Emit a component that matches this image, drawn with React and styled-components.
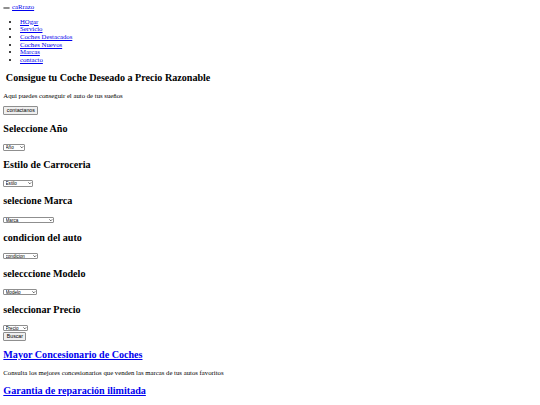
import React from 'react'
import styled, { createGlobalStyle } from 'styled-components'

const GlobalStyle = createGlobalStyle`
  html, body {
    margin: 0;
    background: #ffffff;
  }
  body {
    padding: 3.33px;
    font-family: "Liberation Serif", "Times New Roman", serif;
    font-size: 6.75px;
    line-height: 1.15;
    color: #000000;
  }
`

const links = ['HOgar ', 'Servicio ', 'Coches Destacados ', 'Coches Nuevos ', 'Marcas ', 'contacto']

const filters = [
  { title: 'Seleccione Año', label: 'Año', width: 22 },
  { title: 'Estilo de Carroceria', label: 'Estilo', width: 30 },
  { title: 'selecione Marca', label: 'Marca', width: 51 },
  { title: 'condicion del auto', label: 'condicion', width: 35 },
  { title: 'selecccione Modelo', label: 'Modelo', width: 34 },
  { title: 'seleccionar Precio', label: 'Precio', width: 25 },
]

const Chevron = () => (
  <Arrow viewBox="0 0 10 6" aria-hidden="true">
    <path d="M1 1l4 4 4-4" fill="none" stroke="#111" strokeWidth="1.8" />
  </Arrow>
)

const App = () => {
  return (
    <>
      <GlobalStyle />
      <Header>
        <ToggleBtn type="button" aria-label="menu" /> <Link href="#">caRrazo</Link>
      </Header>
      <NavList>
        {links.map((text) => (
          <li key={text}>
            <Link href="#">{text}</Link>
          </li>
        ))}
      </NavList>

      <section>
        <Title>{'\u00a0Consigue tu Coche Deseado a Precio Razonable'}</Title>
        <Text>Aqui puedes conseguir el auto de tus sueños</Text>
        <div>
          <Button type="button">contactanos</Button>
        </div>
      </section>

      <form onSubmit={(e) => e.preventDefault()}>
        {filters.map((f) => (
          <div key={f.title}>
            <Title>{f.title}</Title>
            <FilterRow>
              <SelectWrap $w={f.width}>
                <Select defaultValue={f.label}>
                  <option>{f.label}</option>
                </Select>
                <Chevron />
              </SelectWrap>
            </FilterRow>
          </div>
        ))}
        <ButtonRow>
          <Button type="submit">Buscar</Button>
        </ButtonRow>
      </form>

      <section>
        <Title>
          <Link href="#">Mayor Concesionario de Coches</Link>
        </Title>
        <Text>Consulta los mejores concesionarios que venden las marcas de tus autos favoritos</Text>
        <Title>
          <Link href="#">Garantia de reparación ilimitada</Link>
        </Title>
      </section>
    </>
  )
}

const Header = styled.div`
  line-height: 7.67px;
`

const Link = styled.a`
  color: #0000ee;
  text-decoration: underline;
  text-decoration-thickness: 0.6px;
  text-underline-offset: 0.8px;
`

const ToggleBtn = styled.button`
  display: inline-block;
  width: 7px;
  height: 2.5px;
  padding: 0;
  margin: 0;
  vertical-align: 1px;
  background: #efefef;
  border: 0.6px solid #8f8f8f;
  border-radius: 1px;
`

const NavList = styled.ul`
  margin: 6.67px 0;
  padding-left: 16.67px;
  list-style: disc;

  li {
    line-height: 7.67px;
  }
`

const Title = styled.h2`
  margin: 8.3px 0;
  font-size: 10.1px;
  font-weight: bold;
  line-height: 11.5px;
`

const Text = styled.p`
  margin: 6.67px 0;
  line-height: 7.67px;
`

const FilterRow = styled.div`
  height: 8.1px;
  line-height: 8.1px;
`

const ButtonRow = styled.div`
  line-height: 0;
  margin-top: 0.5px;
`

const Button = styled.button`
  font-family: "Liberation Sans", Arial, sans-serif;
  font-size: 5.2px;
  line-height: 7px;
  height: 8.5px;
  padding: 0 2.5px;
  margin: 0;
  color: #000000;
  background: #efefef;
  border: 0.6px solid #8f8f8f;
  border-radius: 1px;
  vertical-align: middle;
`

const SelectWrap = styled.span`
  position: relative;
  display: inline-block;
  width: ${(p) => p.$w}px;
  height: 6.4px;
  vertical-align: middle;
`

const Select = styled.select`
  appearance: none;
  -webkit-appearance: none;
  display: block;
  box-sizing: border-box;
  width: 100%;
  height: 100%;
  font-family: "Liberation Sans", Arial, sans-serif;
  font-size: 4.6px;
  line-height: 5.4px;
  padding: 0 0 0 1.2px;
  margin: 0;
  color: #000000;
  background: #ffffff;
  border: 0.6px solid #8f8f8f;
  border-radius: 1px;
  outline: none;
`

const Arrow = styled.svg`
  position: absolute;
  right: 1.6px;
  top: 2.1px;
  width: 3.6px;
  height: 2.2px;
  pointer-events: none;
`

export default App
